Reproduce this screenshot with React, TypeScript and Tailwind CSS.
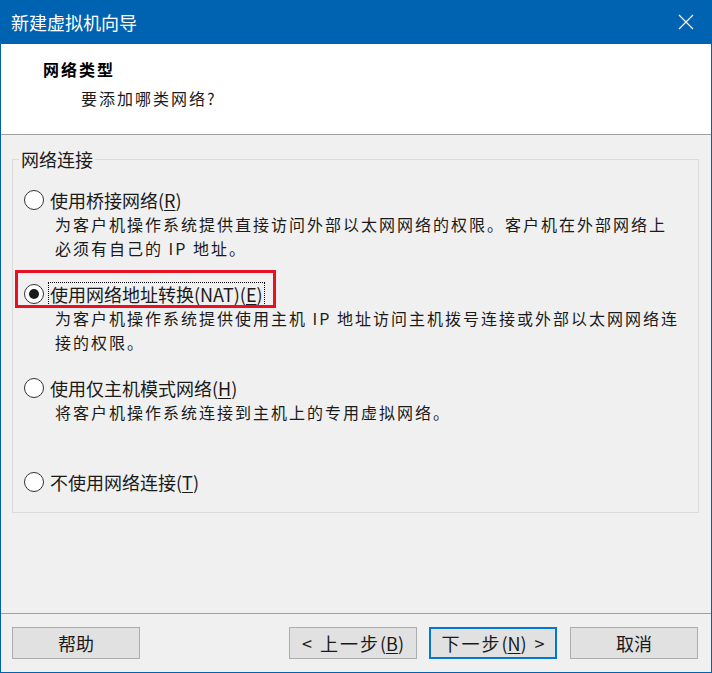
const ui = "font-['Noto_Sans_CJK_SC','Noto_Sans',sans-serif]";
const song = "font-['Noto_Sans_CJK_SC',serif]";

function Radio({ checked }: { checked?: boolean }) {
  return (
    <span className="flex h-[20px] w-[20px] shrink-0 items-center justify-center rounded-full border border-[#333333] bg-white">
      {checked && <span className="h-[10px] w-[10px] rounded-full bg-[#1a1a1a]" />}
    </span>
  );
}

function Option({
  label,
  hotkey,
  lines,
  checked,
  focused,
  last,
}: {
  label: string;
  hotkey: string;
  lines: string[];
  checked?: boolean;
  focused?: boolean;
  last?: boolean;
}) {
  return (
    <div className={last ? 'relative' : 'relative h-[94px]'}>
      {focused && (
        <div className="pointer-events-none absolute left-[-9px] top-[-12px] h-[38px] w-[261px] border-[3px] border-[#e81123]" />
      )}
      <div className="flex h-[24px] items-center gap-[4px]">
        <Radio checked={checked} />
        <span
          className={
            'px-[1px] text-[18px] leading-[22px] text-[#1a1a1a] ' +
            (focused ? 'border border-dotted border-black' : 'border border-transparent')
          }
        >
          {label}(<span className="underline underline-offset-2">{hotkey}</span>)
        </span>
      </div>
      <div className={`${song} pl-[31px] text-[16px] leading-[24px] tracking-[2px] text-[#1a1a1a]`}>
        {lines.map((l) => (
          <div key={l}>{l}</div>
        ))}
      </div>
    </div>
  );
}

function Button({ children, primary }: { children: React.ReactNode; primary?: boolean }) {
  return (
    <button
      type="button"
      className={
        'flex h-[32px] w-[128px] items-center justify-center bg-[#e1e1e1] text-[18px] text-[#1a1a1a] ' +
        (primary ? 'border-2 border-[#0078d7]' : 'border border-[#adadad]')
      }
    >
      {children}
    </button>
  );
}

export default function App() {
  return (
    <div className={`${ui} flex h-[673px] w-[712px] flex-col border-x border-b border-[#0063b1] bg-[#f0f0f0]`}>
      <div className="flex h-[44px] shrink-0 items-center justify-between bg-[#0063b1] pl-[10px] pr-[16px]">
        <span className="text-[18px] text-white">新建虚拟机向导</span>
        <svg width="16" height="16" viewBox="0 0 16 16" className="mr-[1px]">
          <path d="M1 1L15 15M15 1L1 15" stroke="white" strokeWidth="1.2" />
        </svg>
      </div>

      <div className={`${song} h-[91px] shrink-0 border-b border-[#a0a0a0] bg-white pl-[42px] pt-[13px]`}>
        <div className="text-[16px] font-bold leading-[24px] tracking-[2px] text-black">网络类型</div>
        <div className="mt-[5px] pl-[38px] text-[16px] leading-[24px] tracking-[2px] text-[#1a1a1a]">
          要添加哪类网络?
        </div>
      </div>

      <div className="flex-1 pl-[11px] pr-[12px] pt-[14px]">
        <fieldset className="border border-[#dcdcdc] pb-[18px] pl-[11px] pt-[19px]">
          <legend className="ml-[-5px] px-[2px] text-[18px] leading-[20px] text-[#1a1a1a]">网络连接</legend>
          <Option
            label="使用桥接网络"
            hotkey="R"
            lines={[
              '为客户机操作系统提供直接访问外部以太网网络的权限。客户机在外部网络上',
              '必须有自己的 IP 地址。',
            ]}
          />
          <Option
            label="使用网络地址转换(NAT)"
            hotkey="E"
            checked
            focused
            lines={[
              '为客户机操作系统提供使用主机 IP 地址访问主机拨号连接或外部以太网网络连',
              '接的权限。',
            ]}
          />
          <Option label="使用仅主机模式网络" hotkey="H" lines={['将客户机操作系统连接到主机上的专用虚拟网络。']} />
          <Option label="不使用网络连接" hotkey="T" lines={[]} last />
        </fieldset>
      </div>

      <div className="flex h-[59px] shrink-0 items-start border-t border-[#a0a0a0] pl-[11px] pr-[13px] pt-[13px]">
        <Button>帮助</Button>
        <div className="ml-auto flex gap-[13px]">
          <div className="flex gap-[12px]">
            <Button>
              &lt;<span className="ml-[8px] tracking-[2px]">上一步</span>(<span className="underline underline-offset-2">B</span>)
            </Button>
            <Button primary>
              <span className="tracking-[2px]">下一步</span>(<span className="underline underline-offset-2">N</span>)<span className="ml-[8px]">&gt;</span>
            </Button>
          </div>
          <Button>取消</Button>
        </div>
      </div>
    </div>
  );
}
